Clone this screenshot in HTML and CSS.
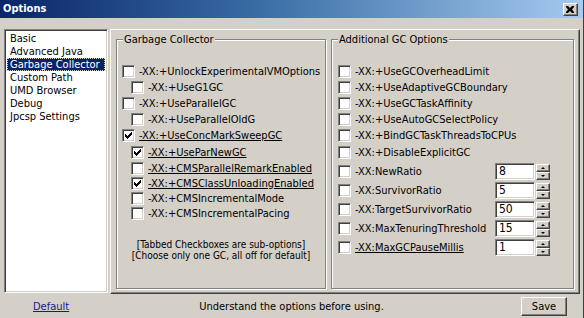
FILE: index.html
```html
<!DOCTYPE html>
<html>
<head>
<meta charset="utf-8">
<link rel="stylesheet" href="styles.css">
</head>
<body>
<div class="window">
  <div class="titlebar">
    <span class="title">Options</span>
    <span class="close"><svg width="8" height="7" viewBox="0 0 8 7"><path d="M0 0h2l2 2 2-2h2v1L6 3.5 8 6v1H6L4 5 2 7H0V6l2-2.5L0 1z" fill="#000"/></svg></span>
  </div>
  <div class="main">
    <ul class="list">
      <li>Basic</li>
      <li>Advanced Java</li>
      <li class="sel">Garbage Collector</li>
      <li>Custom Path</li>
      <li>UMD Browser</li>
      <li>Debug</li>
      <li>Jpcsp Settings</li>
    </ul>
    <div class="panel">
      <div class="group gc">
        <span class="legend">Garbage Collector</span>
        <div class="rows">
          <div class="row"><span class="cb"></span><span>-XX:+UnlockExperimentalVMOptions</span></div>
          <div class="row sub"><span class="cb"></span><span>-XX:+UseG1GC</span></div>
          <div class="row"><span class="cb"></span><span>-XX:+UseParallelGC</span></div>
          <div class="row sub"><span class="cb"></span><span>-XX:+UseParallelOldG</span></div>
          <div class="row tall"><span class="cb on"><svg viewBox="0 0 13 13"><path d="M3 5h1v3H3zM4 6h1v3H4zM5 7h1v3H5zM6 6h1v3H6zM7 5h1v3H7zM8 4h1v3H8zM9 3h1v3H9z"/></svg></span><span class="u">-XX:+UseConcMarkSweepGC</span></div>
          <div class="row sub"><span class="cb on"><svg viewBox="0 0 13 13"><path d="M3 5h1v3H3zM4 6h1v3H4zM5 7h1v3H5zM6 6h1v3H6zM7 5h1v3H7zM8 4h1v3H8zM9 3h1v3H9z"/></svg></span><span class="u">-XX:+UseParNewGC</span></div>
          <div class="row sub"><span class="cb"></span><span class="u">-XX:+CMSParallelRemarkEnabled</span></div>
          <div class="row sub short"><span class="cb on"><svg viewBox="0 0 13 13"><path d="M3 5h1v3H3zM4 6h1v3H4zM5 7h1v3H5zM6 6h1v3H6zM7 5h1v3H7zM8 4h1v3H8zM9 3h1v3H9z"/></svg></span><span class="u">-XX:+CMSClassUnloadingEnabled</span></div>
          <div class="row sub short"><span class="cb"></span><span>-XX:+CMSIncrementalMode</span></div>
          <div class="row sub short"><span class="cb"></span><span>-XX:+CMSIncrementalPacing</span></div>
        </div>
        <p class="note">[Tabbed Checkboxes are sub-options]<br>[Choose only one GC, all off for default]</p>
      </div>
      <div class="group add">
        <span class="legend">Additional GC Options</span>
        <div class="rows">
          <div class="row"><span class="cb"></span><span class="lbl">-XX:+UseGCOverheadLimit</span></div>
          <div class="row"><span class="cb"></span><span class="lbl">-XX:+UseAdaptiveGCBoundary</span></div>
          <div class="row"><span class="cb"></span><span class="lbl">-XX:+UseGCTaskAffinity</span></div>
          <div class="row"><span class="cb"></span><span class="lbl">-XX:+UseAutoGCSelectPolicy</span></div>
          <div class="row"><span class="cb"></span><span class="lbl">-XX:+BindGCTaskThreadsToCPUs</span></div>
          <div class="row spin-row"><span class="cb"></span><span class="lbl">-XX:+DisableExplicitGC</span></div>
          <div class="row spin-row"><span class="cb"></span><span class="lbl">-XX:NewRatio</span><span class="spinner"><span class="field">8</span><span class="btns"><span class="sb"><i class="up"></i></span><span class="sb"><i class="down"></i></span></span></span></div>
          <div class="row spin-row"><span class="cb"></span><span class="lbl">-XX:SurvivorRatio</span><span class="spinner"><span class="field">5</span><span class="btns"><span class="sb"><i class="up"></i></span><span class="sb"><i class="down"></i></span></span></span></div>
          <div class="row spin-row"><span class="cb"></span><span class="lbl">-XX:TargetSurvivorRatio</span><span class="spinner"><span class="field">50</span><span class="btns"><span class="sb"><i class="up"></i></span><span class="sb"><i class="down"></i></span></span></span></div>
          <div class="row spin-row"><span class="cb"></span><span class="lbl">-XX:MaxTenuringThreshold</span><span class="spinner"><span class="field">15</span><span class="btns"><span class="sb"><i class="up"></i></span><span class="sb"><i class="down"></i></span></span></span></div>
          <div class="row spin-row"><span class="cb"></span><span class="lbl"><span class="u">-XX:MaxGCPauseMillis</span></span><span class="spinner"><span class="field">1</span><span class="btns"><span class="sb"><i class="up"></i></span><span class="sb"><i class="down"></i></span></span></span></div>
        </div>
      </div>
    </div>
  </div>
  <div class="footer">
    <div class="fl"><a class="link" href="#">Default</a></div>
    <div class="msg">Understand the options before using.</div>
    <div class="fr"><button class="btn">Save</button></div>
  </div>
</div>
</body>
</html>
```
FILE: styles.css
```css
* { box-sizing: border-box; }
html, body { margin: 0; padding: 0; }
body {
  background: #d4d0c8;
  font-family: "DejaVu Sans Condensed", "DejaVu Sans", sans-serif;
  font-stretch: condensed;
  font-size: 11px;
  color: #000;
}
.window {
  width: 584px;
  height: 318px;
  overflow: hidden;
  background: #d4d0c8;
  border-right: 1px solid #404040;
  display: flex;
  flex-direction: column;
}
.titlebar {
  height: 18px;
  flex: none;
  background: linear-gradient(to right, #0a246a 0%, #3a6ea5 45%, #a6caf0 100%);
  display: flex;
  align-items: center;
  padding-left: 3px;
  padding-right: 5px;
}
.title {
  color: #fff;
  font-weight: bold;
  flex: 1;
  line-height: 18px;
}
.close {
  width: 15px;
  height: 13px;
  background: #d4d0c8;
  border-top: 1px solid #fff;
  border-left: 1px solid #fff;
  border-right: 1px solid #404040;
  border-bottom: 1px solid #404040;
  box-shadow: inset -1px -1px 0 #808080;
  display: flex;
  align-items: center;
  justify-content: center;
  padding-right: 1px;
}
.close svg { display: block; }
.main {
  display: flex;
  gap: 2px;
  margin-top: 11px;
  padding-left: 4px;
  height: 265px;
}
.list {
  list-style: none;
  margin: 0;
  padding: 0;
  width: 104px;
  height: 264px;
  background: #fff;
  border-top: 1px solid #808080;
  border-left: 1px solid #808080;
  border-right: 1px solid #fff;
  border-bottom: 1px solid #fff;
  box-shadow: inset 1px 1px 0 #404040, inset -1px -1px 0 #d4d0c8;
  padding: 2px;
}
.list li {
  height: 13px;
  line-height: 13px;
  padding-left: 3px;
  white-space: nowrap;
}
.list li.sel {
  background: #0a246a;
  color: #fff;
  outline: 1px dotted #d4d0c8;
  outline-offset: -1px;
}
.panel {
  width: 470px;
  height: 265px;
  border-top: 1px solid #fff;
  border-left: 1px solid #fff;
  border-right: 1px solid #404040;
  border-bottom: 1px solid #404040;
  box-shadow: inset -1px -1px 0 #808080;
  display: flex;
  gap: 5px;
  padding: 9px 0 0 5px;
}
.group {
  position: relative;
  height: 250px;
  border: 1px solid #808080;
  box-shadow: 1px 1px 0 #fff, inset 1px 1px 0 #fff;
}
.gc { width: 210px; }
.add { width: 243px; }
.legend {
  position: absolute;
  top: -7px;
  left: 6px;
  padding: 0 1px;
  background: #d4d0c8;
  line-height: 13px;
}
.rows {
  display: flex;
  flex-direction: column;
  padding-top: 23px;
  padding-left: 5px;
}
.add .rows { padding-left: 6px; padding-right: 23px; }
.row {
  height: 16px;
  display: flex;
  align-items: center;
  gap: 4px;
  white-space: nowrap;
}
.row.tall { height: 17px; }
.row.short { height: 15px; }
.row.sub { padding-left: 9px; }
.row.spin-row { height: 19px; }
.lbl { flex: 1; }
.u { text-decoration: underline; }
.cb {
  width: 13px;
  height: 13px;
  flex: none;
  background: #fff;
  border-top: 1px solid #808080;
  border-left: 1px solid #808080;
  border-right: 1px solid #fff;
  border-bottom: 1px solid #fff;
  box-shadow: inset 1px 1px 0 #404040, inset -1px -1px 0 #d4d0c8;
  position: relative;
}
.cb svg {
  position: absolute;
  left: -1px;
  top: -1px;
  width: 13px;
  height: 13px;
  fill: #000;
}
.note {
  margin: 0;
  position: absolute;
  left: 0;
  right: 0;
  top: 199px;
  text-align: center;
  font-size: 10px;
  line-height: 11px;
}
.spinner {
  display: flex;
  gap: 1px;
  flex: none;
  height: 17px;
}
.field {
  width: 40px;
  height: 17px;
  background: #fff;
  border-top: 1px solid #808080;
  border-left: 1px solid #808080;
  border-right: 1px solid #fff;
  border-bottom: 1px solid #fff;
  box-shadow: inset 1px 1px 0 #404040, inset -1px -1px 0 #d4d0c8;
  padding-left: 3px;
  line-height: 15px;
  font-size: 12px;
}
.btns {
  width: 14px;
  height: 16px;
  margin-top: 1px;
  display: flex;
  flex-direction: column;
}
.sb {
  flex: 1;
  background: #d4d0c8;
  border-top: 1px solid #fff;
  border-left: 1px solid #fff;
  border-right: 1px solid #404040;
  border-bottom: 1px solid #404040;
  box-shadow: inset -1px -1px 0 #808080;
  display: flex;
  align-items: center;
  justify-content: center;
}
.sb i {
  width: 0;
  height: 0;
  border-left: 2px solid transparent;
  border-right: 2px solid transparent;
}
.sb i.up { border-bottom: 2px solid #000; }
.sb i.down { border-top: 2px solid #000; }
.footer {
  flex: 1;
  display: grid;
  grid-template-columns: 1fr auto 1fr;
  align-items: center;
}
.fl { padding-left: 33px; }
.link { color: #1a1a8c; text-decoration: underline; }
.msg { white-space: nowrap; }
.fr { justify-self: end; padding-right: 16px; }
.btn {
  font: inherit;
  width: 46px;
  height: 19px;
  padding: 0;
  background: #d4d0c8;
  color: #000;
  border-top: 1px solid #fff;
  border-left: 1px solid #fff;
  border-right: 1px solid #404040;
  border-bottom: 1px solid #404040;
  box-shadow: inset -1px -1px 0 #808080;
}
```
